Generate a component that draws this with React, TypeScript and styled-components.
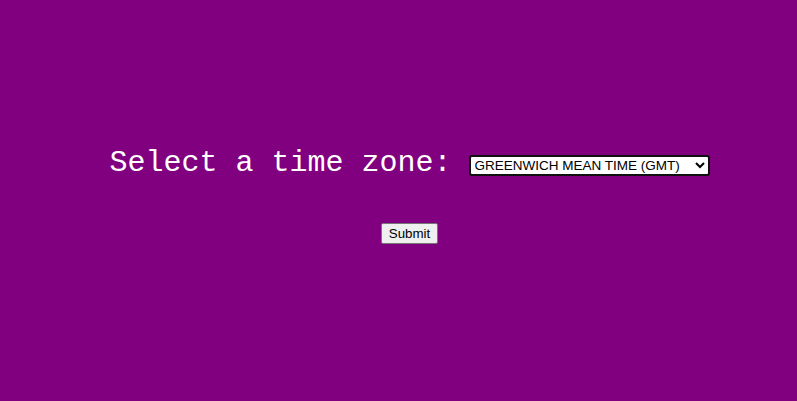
import React from "react";
import styled, { createGlobalStyle } from "styled-components";

const Global = createGlobalStyle`
  html, body {
    margin: 0;
    padding: 0;
    background: #800080;
  }
`;

const S = {
  Page: styled.div`
    height: 401px;
    display: flex;
    flex-direction: column;
    align-items: center;
    padding-top: 143px;
    padding-left: 22px;
    box-sizing: border-box;
  `,
  Row: styled.div`
    display: flex;
    align-items: center;
    gap: 17px;
  `,
  Label: styled.label`
    font-family: "Liberation Mono", "Courier New", monospace;
    font-size: 30px;
    line-height: 40px;
    color: #ffffff;
  `,
  Select: styled.select`
    width: 241px;
    height: 21px;
    margin-top: 4px;
    font-family: "Liberation Sans", Arial, sans-serif;
    font-size: 13.5px;
    color: #000;
    background: #fff;
    border: 2px solid #101010;
    border-radius: 3px;
    padding: 0;
  `,
  Button: styled.button`
    margin-top: 40px;
    height: 21px;
    padding: 1px 7px;
    font-family: "Liberation Sans", Arial, sans-serif;
    font-size: 13.33px;
    color: #000;
    background: #efefef;
    border: 1px solid #767676;
    border-radius: 2px;
  `,
};

const zones = [
  "GREENWICH MEAN TIME (GMT)",
  "EASTERN STANDARD TIME (EST)",
  "CENTRAL STANDARD TIME (CST)",
  "PACIFIC STANDARD TIME (PST)",
];

const App = () => (
  <>
    <Global />
    <S.Page>
      <S.Row>
        <S.Label htmlFor="tz">Select a time zone:</S.Label>
        <S.Select id="tz" defaultValue={zones[0]}>
          {zones.map((z) => (
            <option key={z}>{z}</option>
          ))}
        </S.Select>
      </S.Row>
      <S.Button type="submit">Submit</S.Button>
    </S.Page>
  </>
);

export default App;
